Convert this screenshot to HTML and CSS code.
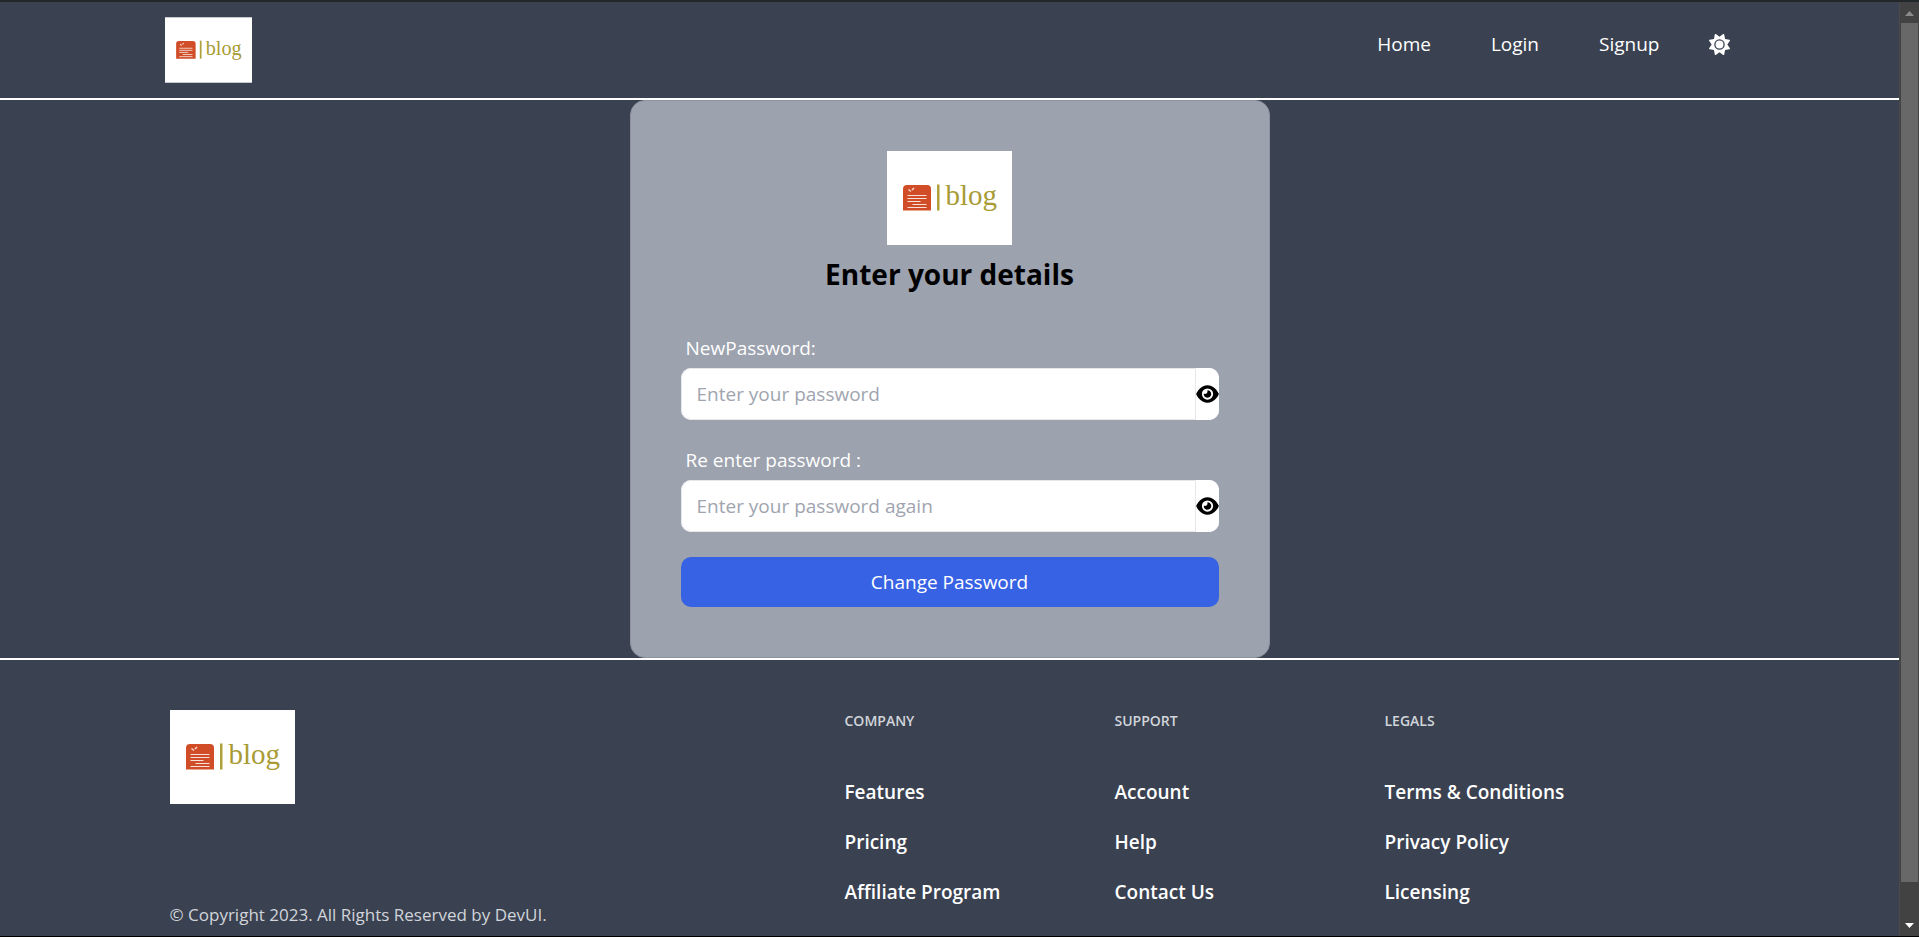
FILE: index.html
```html
<!DOCTYPE html>
<html lang="en">
<head>
  <meta charset="utf-8">
  <meta name="viewport" content="width=device-width, initial-scale=1">
  <title>Change Password</title>
  <link rel="stylesheet" href="styles.css">
</head>
<body>
  <svg width="0" height="0" class="sprite" aria-hidden="true">
    <symbol id="logo" viewBox="0 0 125 94">
      <rect width="125" height="94" fill="#fff"/>
      <path d="M16 59.500V38q0-4 4-4h20q4 0 4 4v21.500z" fill="#d04d27"/>
      <path d="M21.500 38.500l2.500 2M25 39l2-2" stroke="#f6d5ca" stroke-width="1.600" fill="none"/>
      <path d="M20.500 44.500h19M20.500 47.500h19M20.500 50.500h13M25.500 53.500h14M20.500 56.500h19" stroke="#f8e0d8" stroke-width="1.200"/>
      <rect x="50" y="33.500" width="2.500" height="26" fill="#aea03a"/>
      <text x="58.500" y="54" class="logo-text">blog</text>
    </symbol>
    <symbol id="eye" viewBox="0 0 576 512">
      <path d="M288 32c-80.800 0-145.500 36.800-192.600 80.600C48.600 156 17.300 208 2.500 243.700c-3.300 7.900-3.300 16.700 0 24.600C17.300 304 48.600 356 95.400 399.400C142.500 443.200 207.200 480 288 480s145.500-36.800 192.600-80.600c46.800-43.500 78.100-95.400 93-131.100c3.300-7.900 3.300-16.700 0-24.600c-14.900-35.700-46.200-87.700-93-131.100C433.500 68.800 368.800 32 288 32zM144 256a144 144 0 1 1 288 0 144 144 0 1 1 -288 0zm144-64c0 35.300-28.700 64-64 64c-7.100 0-13.900-1.200-20.300-3.300c-5.500-1.800-11.900 1.600-11.700 7.400c.3 6.900 1.300 13.800 3.200 20.700c13.700 51.200 66.400 81.600 117.600 67.900s81.600-66.400 67.900-117.600c-11.100-41.500-47.800-69.400-88.600-71.100c-5.800-.2-9.200 6.100-7.400 11.700c2.100 6.400 3.300 13.200 3.300 20.300z"/>
    </symbol>
    <symbol id="sun" viewBox="0 0 512 512">
      <path fill="currentColor" d="M361.500 1.200c5 2.100 8.600 6.600 9.600 11.900L391 121l107.900 19.800c5.300 1 9.800 4.600 11.900 9.600s1.500 10.700-1.600 15.200L446.900 256l62.300 90.300c3.100 4.500 3.700 10.200 1.600 15.200s-6.600 8.600-11.900 9.600L391 391 371.100 498.900c-1 5.300-4.600 9.800-9.600 11.900s-10.700 1.500-15.200-1.600L256 446.900l-90.300 62.300c-4.500 3.100-10.200 3.700-15.200 1.600s-8.600-6.600-9.600-11.900L121 391 13.100 371.100c-5.300-1-9.800-4.600-11.900-9.600s-1.500-10.700 1.600-15.200L65.100 256 2.800 165.700c-3.100-4.500-3.700-10.200-1.600-15.200s6.600-8.600 11.900-9.600L121 121 140.900 13.100c1-5.300 4.600-9.800 9.600-11.900s10.700-1.500 15.200 1.600L256 65.100 346.300 2.800c4.500-3.100 10.200-3.700 15.200-1.600zM160 256a96 96 0 1 1 192 0 96 96 0 1 1 -192 0zm224 0a128 128 0 1 0 -256 0 128 128 0 1 0 256 0z"/>
    </symbol>
  </svg>

  <div class="window">
    <div class="page">
      <header class="header">
        <div class="header-inner">
          <a href="#" class="brand" aria-label="Blog home"><svg class="logo-small"><use href="#logo"/></svg></a>
          <nav class="nav">
            <a href="#">Home</a>
            <a href="#">Login</a>
            <a href="#">Signup</a>
            <button type="button" class="theme" aria-label="Toggle theme"><svg class="sun"><use href="#sun"/></svg></button>
          </nav>
        </div>
      </header>

      <main class="main">
        <section class="card">
          <svg class="logo"><use href="#logo"/></svg>
          <h2 class="title">Enter your details</h2>
          <form class="form">
            <div class="field">
              <label for="new-password">NewPassword:</label>
              <div class="control">
                <input type="password" id="new-password" placeholder="Enter your password">
                <button type="button" aria-label="Show password"><svg class="eye"><use href="#eye"/></svg></button>
              </div>
            </div>
            <div class="field">
              <label for="repeat-password">Re enter password :</label>
              <div class="control">
                <input type="password" id="repeat-password" placeholder="Enter your password again">
                <button type="button" aria-label="Show repeated password"><svg class="eye"><use href="#eye"/></svg></button>
              </div>
            </div>
            <button type="submit" class="submit">Change Password</button>
          </form>
        </section>
      </main>

      <footer class="footer">
        <div class="footer-grid">
          <div class="about">
            <a href="#" class="brand" aria-label="Blog home"><svg class="logo"><use href="#logo"/></svg></a>
            <p>© Copyright 2023. All Rights Reserved by DevUI.</p>
          </div>
          <div class="links">
            <h3>COMPANY</h3>
            <ul>
              <li><a href="#">Features</a></li>
              <li><a href="#">Pricing</a></li>
              <li><a href="#">Affiliate Program</a></li>
            </ul>
          </div>
          <div class="links">
            <h3>SUPPORT</h3>
            <ul>
              <li><a href="#">Account</a></li>
              <li><a href="#">Help</a></li>
              <li><a href="#">Contact Us</a></li>
            </ul>
          </div>
          <div class="links">
            <h3>LEGALS</h3>
            <ul>
              <li><a href="#">Terms &amp; Conditions</a></li>
              <li><a href="#">Privacy Policy</a></li>
              <li><a href="#">Licensing</a></li>
            </ul>
          </div>
        </div>
      </footer>
    </div>

    <div class="scrollbar" aria-hidden="true">
      <svg class="arrow" viewBox="0 0 19 21"><path d="M5 14h9l-4.500-5z" fill="#8a8a8a"/></svg>
      <div class="thumb"></div>
      <div class="track"></div>
      <svg class="arrow" viewBox="0 0 19 21"><path d="M5 8h9l-4.500 5z" fill="#fff"/></svg>
    </div>
  </div>
</body>
</html>
```

FILE: styles.css
```css
*,
*::before,
*::after {
  box-sizing: border-box;
}

body {
  margin: 0;
  background: #3a4150;
  color: #fff;
  font-family: "Segoe UI", "Open Sans", "Noto Sans", sans-serif;
  font-size: 19px;
  line-height: 30px;
}

h2, h3, p, ul {
  margin: 0;
  padding: 0;
}

ul {
  list-style: none;
}

a {
  color: inherit;
  text-decoration: none;
}

button,
input {
  margin: 0;
  padding: 0;
  border: 0;
  font: inherit;
}

button {
  cursor: pointer;
}

svg {
  display: block;
}

.sprite {
  display: none;
}

.logo-text {
  font-family: "Liberation Serif", serif;
  font-size: 29px;
  fill: #a89b35;
}

.window {
  display: flex;
  height: 100vh;
  overflow: hidden;
  border-top: 2px solid #22272a;
  border-bottom: 1px solid #000;
}

.page {
  flex: 1;
  min-width: 0;
}

.header {
  border-bottom: 2px solid #fff;
}

.header-inner {
  display: flex;
  justify-content: space-between;
  max-width: 1600px;
  margin: 0 auto;
  padding: 15px 20px 15px 15px;
}

.logo-small {
  width: 87px;
  height: 66px;
}

.logo {
  width: 125px;
  height: 94px;
}

.nav {
  display: flex;
  align-items: flex-start;
  gap: 60px;
  padding-top: 12px;
}

.theme {
  display: flex;
  align-items: center;
  height: 30px;
  margin-left: -11px;
  background: none;
  color: #fff;
}

.sun {
  width: 21px;
  height: 21px;
}

.main {
  display: flex;
  justify-content: center;
}

.card {
  width: 100%;
  max-width: 640px;
  padding: 50px;
  border: 1px solid #8d929e;
  border-radius: 15px;
  background: #9ca2ae;
}

.card .logo {
  margin: 0 auto;
}

.title {
  margin: 10px 0 40px;
  color: #000;
  font-size: 28px;
  font-weight: 700;
  line-height: 38px;
  text-align: center;
}

.form {
  display: flex;
  flex-direction: column;
  gap: 25px;
}

.field label {
  display: block;
  width: fit-content;
  margin-bottom: 5px;
  padding-left: 5px;
}

.control {
  display: flex;
  height: 52px;
  overflow: hidden;
  border-radius: 10px;
  background: #fff;
}

.control input {
  flex: 1;
  min-width: 0;
  padding: 0 15px;
  border: 1px solid #e5e7eb;
  border-radius: 10px 0 0 10px;
  background: #fff;
  color: #000;
}

.control input::placeholder {
  color: #a0a4af;
  opacity: 1;
}

.control button {
  background: #fff;
}

.eye {
  width: 23px;
  height: 20px;
}

.submit {
  height: 50px;
  border-radius: 10px;
  background: #3862e4;
  color: #fff;
}

.footer {
  padding: 50px 0;
  border-top: 2px solid #fff;
}

.footer-grid {
  display: grid;
  grid-template-columns: 5fr 2fr 2fr 3fr;
  max-width: 1620px;
  margin: 0 auto;
}

.about,
.links {
  padding-left: 30px;
}

.about {
  display: flex;
  flex-direction: column;
  justify-content: space-between;
  align-items: flex-start;
  color: #d1d5db;
  font-size: 17px;
  line-height: 25px;
}

.links h3 {
  margin-bottom: 45px;
  color: #d1d5db;
  font-size: 14px;
  font-weight: 600;
  line-height: 22px;
}

.links li {
  margin-bottom: 20px;
  font-weight: 600;
}

.scrollbar {
  display: flex;
  flex-direction: column;
  width: 20px;
  border-left: 1px solid #4a4a4c;
  background: #424242;
}

.arrow {
  width: 19px;
  height: 21px;
}

.thumb {
  flex: 859;
  margin: 0 1px;
  background: #686868;
}

.track {
  flex: 33;
}
```
